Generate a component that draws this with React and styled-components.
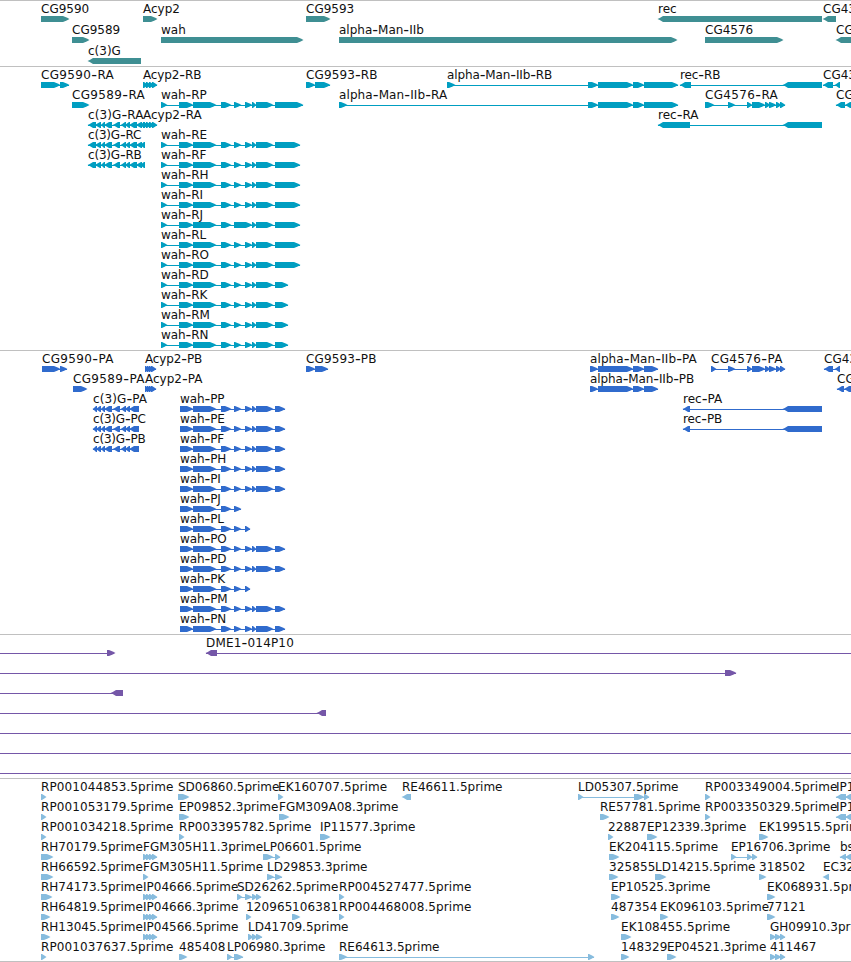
import { Fragment } from 'react';
import styled, { createGlobalStyle } from 'styled-components';

const GlobalStyle = createGlobalStyle`
	body {
		margin: 0;
		background: #fff;
	}
`;

const Browser = styled.main`
	width: 851px;
	height: 962px;
	display: flex;
	flex-direction: column;
	overflow: hidden;
	box-sizing: border-box;
	border-bottom: 1px solid #c0c0c0;
	font-family: 'DejaVu Sans', sans-serif;
	font-size: 12px;
`;

const Track = styled.section`
	flex: none;
	height: ${({ $height }) => $height}px;
	box-sizing: border-box;
	border-top: 1px solid #c0c0c0;
	color: ${({ $color }) => $color};
`;

const Lane = styled.div`
	position: relative;
	height: ${({ $height }) => $height}px;
`;

// features sit at their position on the sequence
const Feature = styled.div`
	position: absolute;
	top: 0;
	display: flex;
	flex-direction: column;
`;

const Label = styled.span`
	height: 16px;
	line-height: 16px;
	white-space: pre;
	color: #111;
	letter-spacing: ${({ $spacing }) => $spacing}px;
`;

const Hyphen = styled.span`
	position: relative;
	top: 1px;
	font-size: 16px;
	line-height: 0;
`;

const Glyph = styled.svg`
	display: block;
	height: 6px;
	margin-top: -1px;
	overflow: visible;
	fill: currentColor;
`;

const f = (label, parts, dir = 1, line) => ({ label, parts, dir, line });
const r = (label, parts, line) => f(label, parts, -1, line);

const genes = [
	[
		f('CG9590', [[41, 69]]),
		f('Acyp2', [[143, 157]]),
		f('CG9593', [[306, 330]]),
		r('rec', [[658, 822]]),
		r('CG43', [[823, 836]]),
	],
	[
		f('CG9589', [[72, 89]]),
		f('wah', [[161, 303]]),
		f('alpha-Man-IIb', [[339, 677]]),
		f('CG4576', [[705, 783]]),
		r('CG', [[836, 870]]),
	],
	[r('c(3)G', [[88, 141]])],
];

const acyp = [[143, 148], [146, 151], [149, 154], [152, 157]];
const acypShort = [[145, 149], [147, 151], [149, 153], [151, 156]];
const c3gMiddle = [[101, 105], [104, 112], [113, 120], [121, 126], [125, 130]];
const c3gRna = [[88, 96], [95, 101], ...c3gMiddle, [129, 137], [136, 142], [140, 145]];
const c3gProtein = [[93, 97], [96, 101], ...c3gMiddle, [129, 139]];
const manTail = [[598, 633], [633, 644]];
const manRna = [[588, 598], ...manTail, [644, 678]];
const manProtein = [[590, 598], ...manTail, [644, 658]];
const recEnd = [783, 822];
const cg4576 = [[728, 735], [747, 752], [752, 765], [765, 770], [769, 776], [776, 781], [780, 785]];
const wahExons = [[179, 193], [193, 216], [221, 231], [234, 241], [245, 252], [252, 256], [256, 273]];
const wahRna = (end) => [[161, 167], ...wahExons, [275, end]];
const wahJ = [[161, 167], [179, 193], [193, 216], [221, 231], [234, 252], [252, 256], [256, 273], [275, 300]];
const wahProtein = [[180, 193], ...wahExons.slice(1), [275, 285]];

const transcripts = [
	[
		f('CG9590-RA', [[41, 60], [60, 69]]),
		f('Acyp2-RB', acyp),
		f('CG9593-RB', [[306, 315], [315, 330]]),
		f('alpha-Man-IIb-RB', [[447, 455], ...manRna]),
		r('rec-RB', [[680, 691], recEnd]),
		r('CG43', [[823, 833], [835, 840]]),
	],
	[
		f('CG9589-RA', [[72, 89]]),
		f('wah-RP', wahRna(303)),
		f('alpha-Man-IIb-RA', [[339, 347], ...manRna]),
		f('CG4576-RA', [[705, 714], ...cg4576]),
		r('CG', [[836, 845], [845, 860]]),
	],
	[r('c(3)G-RA', c3gRna), f('Acyp2-RA', acyp), r('rec-RA', [[658, 690], recEnd])],
	[r('c(3)G-RC', c3gRna), f('wah-RE', wahRna(300))],
	[r('c(3)G-RB', c3gRna), f('wah-RF', wahRna(300))],
	[f('wah-RH', wahRna(300))],
	[f('wah-RI', wahRna(300))],
	[f('wah-RJ', wahJ)],
	[f('wah-RL', wahRna(300))],
	[f('wah-RO', wahRna(300))],
	[f('wah-RD', wahRna(288))],
	[f('wah-RK', wahRna(288))],
	[f('wah-RM', wahRna(288))],
	[f('wah-RN', wahRna(288))],
];

const proteins = [
	[
		f('CG9590-PA', [[42, 60], [60, 67]]),
		f('Acyp2-PB', acypShort),
		f('CG9593-PB', [[306, 315], [315, 328]]),
		f('alpha-Man-IIb-PA', manProtein),
		f('CG4576-PA', [[711, 716], ...cg4576]),
		r('CG43', [[824, 833], [835, 840]]),
	],
	[
		f('CG9589-PA', [[73, 87]]),
		f('Acyp2-PA', acypShort),
		f('alpha-Man-IIb-PB', manProtein),
		r('CG', [[837, 844], [844, 860]]),
	],
	[r('c(3)G-PA', c3gProtein), f('wah-PP', wahProtein), r('rec-PA', [[683, 690], recEnd])],
	[r('c(3)G-PC', c3gProtein), f('wah-PE', wahProtein), r('rec-PB', [[683, 690], recEnd])],
	[r('c(3)G-PB', c3gProtein), f('wah-PF', wahProtein)],
	[f('wah-PH', wahProtein)],
	[f('wah-PI', wahProtein)],
	[f('wah-PJ', wahProtein.slice(0, 4))],
	[f('wah-PL', [...wahProtein.slice(0, 4), [245, 250]])],
	[f('wah-PO', wahProtein)],
	[f('wah-PD', wahProtein)],
	[f('wah-PK', [...wahProtein.slice(0, 4), [245, 250]])],
	[f('wah-PM', wahProtein)],
	[f('wah-PN', wahProtein)],
];

const bacs = [
	[f('', [[107, 115]], 1, [0, 114]), r('DME1-014P10', [[206, 217]], [206, 851])],
	[f('', [[725, 736]], 1, [0, 736])],
	[r('', [[111, 123]], [0, 123])],
	[r('', [[317, 326]], [0, 326])],
	[f('', [], 1, [0, 851])],
	[f('', [], 1, [0, 851])],
	[f('', [], 1, [0, 851])],
];

const gh = [[770, 776], [775, 781], [780, 785]];

const ests = [
	[
		f('RP001044853.5prime', [[41, 46]]),
		f('SD06860.5prime', [[178, 189]]),
		f('EK160707.5prime', [[278, 283]]),
		r('RE46611.5prime', [[402, 411]]),
		f('LD05307.5prime', [[578, 583], [634, 644], [644, 649]]),
		f('RP003349004.5prime', [[705, 710]]),
		r('IP1', [[836, 846], [845, 860]]),
	],
	[
		f('RP001053179.5prime', [[41, 46]]),
		f('EP09852.3prime', [[179, 189]]),
		f('FGM309A08.3prime', [[279, 289]]),
		f('RE57781.5prime', [[600, 609]]),
		f('RP003350329.5prime', [[705, 710]]),
		r('IP1', [[836, 846], [845, 860]]),
	],
	[
		f('RP001034218.5prime', [[41, 46]]),
		f('RP003395782.5prime', [[179, 184]]),
		f('IP11577.3prime', [[320, 330]]),
		f('22887', [[608, 613]]),
		f('EP12339.3prime', [[647, 657]]),
		f('EK199515.5prime', [[759, 768]]),
	],
	[
		f('RH70179.5prime', [[41, 53]]),
		f('FGM305H11.3prime', acyp),
		f('LP06601.5prime', [[263, 273], [275, 280]]),
		f('EK204115.5prime', [[609, 619]]),
		f('EP16706.3prime', [[731, 736], [747, 752], [752, 757]]),
		r('bs', [[840, 846], [845, 860]]),
	],
	[
		f('RH66592.5prime', [[41, 53]]),
		f('FGM305H11.5prime', [[143, 148]]),
		f('LD29853.3prime', [[267, 274], [275, 282]]),
		f('325855', [[609, 618]]),
		f('LD14215.5prime', [[655, 666]]),
		f('318502', [[759, 766]]),
		r('EC32', [[823, 829]]),
	],
	[
		f('RH74173.5prime', [[41, 52]]),
		f('IP04666.5prime', acyp),
		f('SD26262.5prime', [[237, 242], [245, 252], [252, 257], [256, 261]]),
		f('RP004527477.5prime', [[339, 344]]),
		f('EP10525.3prime', [[611, 620]]),
		f('EK068931.5prime', [[767, 775]]),
	],
	[
		f('RH64819.5prime', [[41, 50]]),
		f('IP04666.3prime', acyp),
		f('120965', [[246, 251]]),
		f('106381', [[292, 300]]),
		f('RP004468008.5prime', [[339, 344]]),
		f('487354', [[611, 619]]),
		f('EK096103.5prime', [[660, 668]]),
		f('77121', [[767, 775]]),
	],
	[
		f('RH13045.5prime', [[41, 50]]),
		f('IP04566.5prime', acyp),
		f('LD41709.5prime', [[248, 253], [252, 257], [256, 262]]),
		f('EK108455.5prime', [[621, 631]]),
		f('GH09910.3prime', gh),
	],
	[
		f('RP001037637.5prime', [[41, 46]]),
		f('485408', [[179, 187]]),
		f('LP06980.3prime', [[227, 232], [234, 243]]),
		f('RE64613.5prime', [[339, 347], [588, 594]]),
		f('148329', [[621, 629]]),
		f('EP04521.3prime', [[667, 676]]),
		f('411467', gh),
	],
];

const tracks = [
	{ name: 'genes', color: '#3f8f93', height: 66, pitch: 21, lanes: genes },
	{ name: 'transcripts', color: '#009ec1', height: 284, pitch: 20, lanes: transcripts },
	{ name: 'proteins', color: '#306bcd', height: 284, pitch: 20, lanes: proteins },
	{ name: 'bacs', color: '#7557a8', height: 144, pitch: 20, lanes: bacs },
	{ name: 'ests', color: '#87bcde', height: 183, pitch: 20, lanes: ests },
];

const spacings = [
	[/^CG\d+-.A$/, 0.34],
	[/^CG\d+-.B$/, 0.12],
	[/^c\(3\)G-.A$/, 0.1],
	[/^c\(3\)G-/, -0.2],
	[/^alpha.*A$/, 0.1],
	[/-.B$/, -0.13],
	[/^wah-/, -0.1],
	[/^DME/, 0.18],
	[/^(RP|EK|\d).*\d/, 0.1],
];

function labelSpacing(label) {
	const match = spacings.find(([pattern]) => pattern.test(label));
	return match ? match[1] : 0;
}

function arrow(from, to, dir) {
	const head = Math.min(7, to - from);
	if (dir > 0) {
		const neck = to - head;
		return `M${from} 0H${neck + 1}L${to - head / 3} 1.5L${to + 0.5} 3L${to - head / 3} 4.5L${neck + 1} 6H${from}Z`;
	}
	const neck = from + Math.min(6, head);
	return `M${to} 0H${neck - 1}L${from + head / 4} 2L${from - 0.5} 3L${from + head / 4} 4L${neck - 1} 6H${to}Z`;
}

function FeatureItem({ label, parts, dir, line }) {
	const start = parts.length ? parts[0][0] : line[0];
	const [x1, x2] = line || [start, parts[parts.length - 1][1]];

	return (
		<Feature style={{ left: start }}>
			<Label $spacing={labelSpacing(label)}>
				{label.split('-').map((piece, i) => (
					<Fragment key={i}>
						{i > 0 && <Hyphen>-</Hyphen>}
						{piece}
					</Fragment>
				))}
			</Label>
			<Glyph width={1}>
				{(line || parts.length > 1) && <rect x={x1 - start} y="3" width={x2 - x1} height="1" />}
				{parts.map(([a, b]) => (
					<path key={a} d={arrow(a - start, b - start, dir)} />
				))}
			</Glyph>
		</Feature>
	);
}

export default function App() {
	return (
		<Browser>
			<GlobalStyle />
			{tracks.map(({ name, color, height, pitch, lanes }) => (
				<Track key={name} $color={color} $height={height}>
					{lanes.map((features, i) => (
						<Lane key={i} $height={pitch}>
							{features.map((feature, j) => (
								<FeatureItem key={j} {...feature} />
							))}
						</Lane>
					))}
				</Track>
			))}
		</Browser>
	);
}
